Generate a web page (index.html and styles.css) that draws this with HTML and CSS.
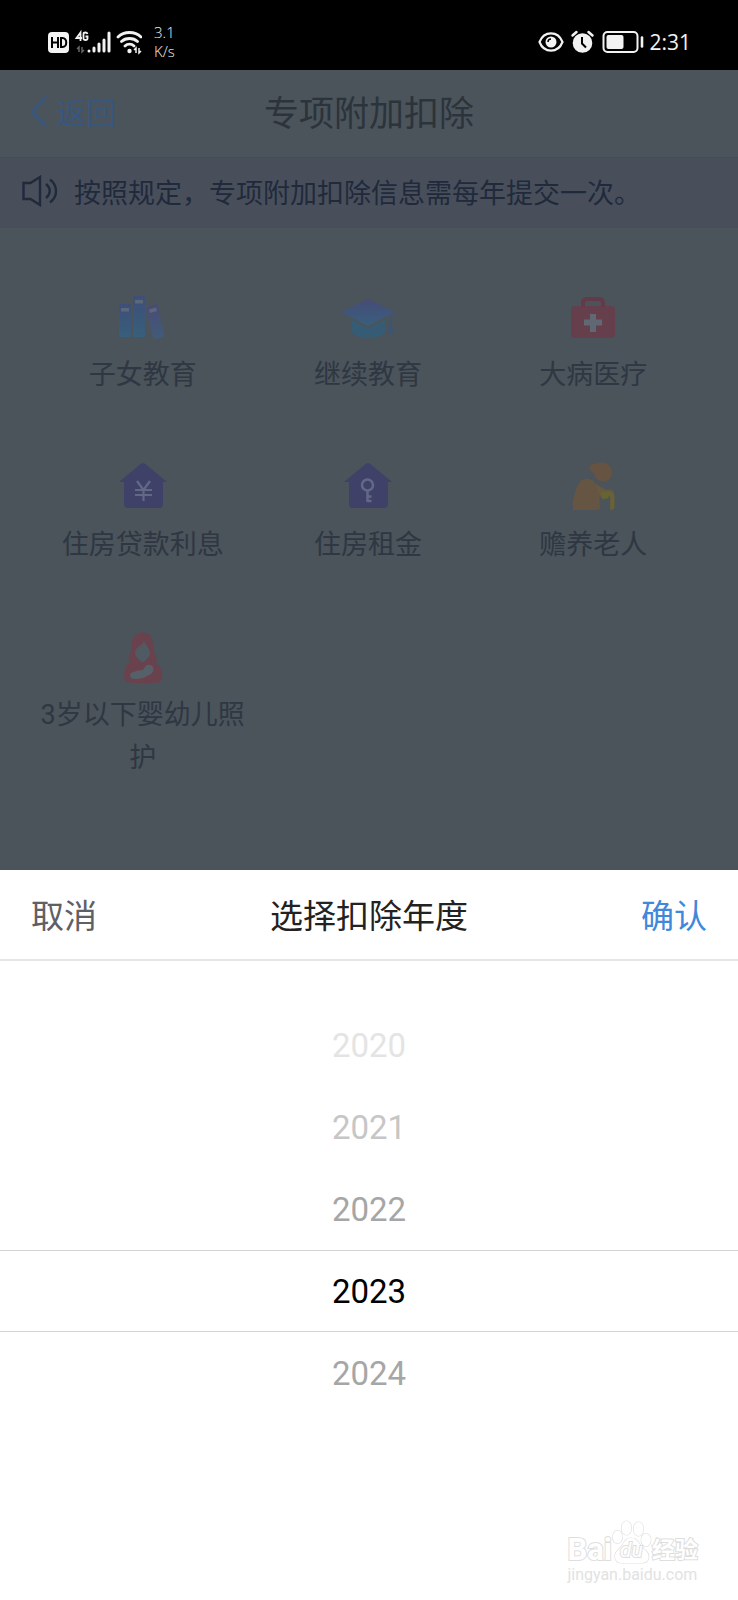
FILE: index.html
```html
<!DOCTYPE html>
<html lang="zh-CN">
  <head>
    <meta charset="UTF-8" />
    <meta name="viewport" content="width=device-width, initial-scale=1.0" />
    <title>专项附加扣除</title>
    <link rel="stylesheet" href="styles.css">
  </head>
  <body>
    <div class="status-bar">
      <div class="status-left">
        <svg width="94" height="26" viewBox="0 0 94 26" aria-hidden="true">
          <rect x="0" y="3" width="21" height="21" rx="4" fill="#f2f2f2" />
          <g fill="none" stroke="#000" stroke-width="2">
            <path d="M4 8v11M10 8v11M4 13.500h6M13 9v9h1.500c5 0 5-9 0-9z" />
          </g>
          <g fill="none" stroke="#f2f2f2" stroke-width="1.800">
            <path d="M32.500 12V3.500L28.500 9h5.500M39.500 5c-.5-2-4-2-4 0v4.500c0 2 4 2 4 0V7.500h-2" />
          </g>
          <path d="M31 23v-5l-2 2M34 18v5l2-2" fill="none" stroke="#666" stroke-width="1.500" />
          <g stroke="#f2f2f2" stroke-width="3" stroke-linecap="round">
            <path d="M41 22v0M46 22v-3M51 22v-7M56 22v-11M61 22V4" />
          </g>
          <g fill="none" stroke="#f2f2f2" stroke-width="2.800" stroke-linecap="round">
            <path d="M70 8c6-6 17-6 23 0M73.500 12.500c4-4 12-4 16 0M77 17c2.500-2.500 6.500-2.500 9 0" />
          </g>
          <circle cx="81.500" cy="22" r="2.200" fill="#f2f2f2" />
          <path d="M88 24v-5l-2 2M91 19v5l2-2" fill="none" stroke="#f2f2f2" stroke-width="1.500" />
        </svg>
        <div class="net-speed">3.1<br>K/s</div>
      </div>
      <div class="status-right">
        <svg width="106" height="26" viewBox="0 0 106 26" aria-hidden="true">
          <g fill="none" stroke="#f2f2f2" stroke-width="2.200">
            <path d="M1.500 13C6 1.500 20 1.500 24.500 13C20 24.500 6 24.500 1.500 13z" />
          </g>
          <circle cx="13" cy="13" r="5.500" fill="#f2f2f2" />
          <path d="M10 13a3 3 0 0 1 3-3" fill="none" stroke="#000" stroke-width="1.500" />
          <circle cx="44.500" cy="14" r="9.800" fill="#f2f2f2" />
          <path d="M34.500 6.500l4-3.500M54.500 6.500l-4-3.500" stroke="#f2f2f2" stroke-width="2.500" stroke-linecap="round" />
          <path d="M44 8v6.500l4 4" fill="none" stroke="#000" stroke-width="2" />
          <rect x="65.500" y="3" width="34" height="20" rx="4" fill="none" stroke="#f2f2f2" stroke-width="2" />
          <rect x="68.500" y="6" width="17" height="14" rx="2" fill="#f2f2f2" />
          <path d="M104 8.500v9" stroke="#f2f2f2" stroke-width="2.600" stroke-linecap="round" />
        </svg>
        <span class="clock">2:31</span>
      </div>
    </div>

    <main class="page">
      <header class="nav-bar">
        <a class="back" href="#">
          <svg width="18" height="32" viewBox="0 0 18 32" aria-hidden="true">
            <path d="M16 2L2 17l14 14" fill="none" stroke="#38577f" stroke-width="3" />
          </svg>
          返回
        </a>
        <h1>专项附加扣除</h1>
      </header>

      <div class="notice">
        <svg width="36" height="32" viewBox="0 0 36 32" aria-hidden="true">
          <g fill="none" stroke="#202a3b" stroke-width="2.400">
            <path d="M1.500 8H8.500L18 2v28l-9.500-6H1.500zM24 9c5 4 5 10 0 14M28 4.500c8 6 8 17 0 23" />
          </g>
        </svg>
        <p>按照规定，专项附加扣除信息需每年提交一次。</p>
      </div>

      <nav class="deductions">
        <a class="item" href="#">
          <svg width="60" height="60" viewBox="0 0 60 60" aria-hidden="true">
            <defs>
              <linearGradient id="book" x1="0" y1="0" x2="0" y2="1">
                <stop offset="0" stop-color="#3f4e78" />
                <stop offset="1" stop-color="#375f7c" />
              </linearGradient>
              <linearGradient id="bookTilted" x1="0" y1="0" x2="0" y2="1">
                <stop offset="0" stop-color="#4a4a74" />
                <stop offset="1" stop-color="#405c7a" />
              </linearGradient>
            </defs>
            <g fill="url(#book)">
              <rect x="6" y="16" width="12" height="33" rx="1.500" />
              <rect x="20" y="8" width="12" height="41" rx="1.500" />
            </g>
            <path d="M34 19l9-3q1.500 0 2 1.500l6 29.500q0 1.500-1 2l-8 2q-1.500 0-2-1.500l-7-28.500q-.5-1.500 1-2z" fill="url(#bookTilted)" />
            <path d="M8 20h8v3.500H8zM22 12h8v3.500h-8zM36 21.500l7-2 1 3.500-7 2z" fill="#5a687a" />
          </svg>
          <span>子女教育</span>
        </a>
        <a class="item" href="#">
          <svg width="60" height="60" viewBox="0 0 60 60" aria-hidden="true">
            <defs>
              <linearGradient id="cap" x1="0" y1="0" x2="0" y2="1">
                <stop offset="0" stop-color="#464c76" />
                <stop offset="1" stop-color="#395f7d" />
              </linearGradient>
            </defs>
            <path d="M3 24L28 12q2-.8 4 0l25 12-27 14z" fill="url(#cap)" />
            <path d="M14 32l16 8.500L47 32v12c-4 8-29 8-33 0z" fill="#365c75" />
            <path d="M52 26v10q-4 6-1.500 10h4.500q1-5-1.500-10V26z" fill="#3f5470" />
          </svg>
          <span>继续教育</span>
        </a>
        <a class="item" href="#">
          <svg width="60" height="60" viewBox="0 0 60 60" aria-hidden="true">
            <rect x="8" y="18" width="44" height="32" rx="4" fill="#653f4c" />
            <path d="M20 19v-4q0-4 4-4h12q4 0 4 4v4" fill="none" stroke="#653a48" stroke-width="4" />
            <path d="M27 26h6v5.500h6v6h-6V44h-6v-6.500h-6v-6h6z" fill="#5f6873" />
          </svg>
          <span>大病医疗</span>
        </a>
        <a class="item" href="#">
          <svg width="60" height="60" viewBox="0 0 60 60" aria-hidden="true">
            <path d="M30 5q1.500 0 3 1.500L54 24h-4v22q0 4-4 4H15q-4 0-4-4V24H6L27 6.500Q28.500 5 30 5z" fill="#404169" />
            <path d="M24 23l6.500 9 6.500-9M30.500 32v11M22 32h17M22 37h17" fill="none" stroke="#626986" stroke-width="2.200" />
          </svg>
          <span>住房贷款利息</span>
        </a>
        <a class="item" href="#">
          <svg width="60" height="60" viewBox="0 0 60 60" aria-hidden="true">
            <path d="M30 5q1.500 0 3 1.500L54 24h-4v22q0 4-4 4H15q-4 0-4-4V24H6L27 6.500Q28.500 5 30 5z" fill="#404169" />
            <circle cx="29.500" cy="27" r="5.500" fill="none" stroke="#626986" stroke-width="2.500" />
            <path d="M29.500 33v11M29.500 38.500h4M29.500 43h4" fill="none" stroke="#626986" stroke-width="2.500" />
          </svg>
          <span>住房租金</span>
        </a>
        <a class="item" href="#">
          <svg width="60" height="60" viewBox="0 0 60 60" aria-hidden="true">
            <path d="M26 9q0-3 6-3q4-2 8-1.500c12 1 12 19 0 19c-5 0-8-4-9-8q-4-2-5-6.500z" fill="#665342" />
            <path d="M10 52C9 36 16 22 21 21q6-2 10 3q5 4 6 9q-1 6 0 16q0 3-3 3z" fill="#675544" />
            <path d="M33 26l10 6q7-2 8 3v14q0 3-4 3V39q-1-2-2 0q-1 3-3 1q-2 3-4-1q-3-2-5-13z" fill="#69593f" />
            <path d="M38 34h9q4.500 0 4.500 5v10q0 3-4 3V39q-1-2-2 0q-1 3-3 1q-2 3-4-1z" fill="#666334" />
          </svg>
          <span>赡养老人</span>
        </a>
        <a class="item" href="#">
          <svg width="60" height="60" viewBox="0 0 60 60" aria-hidden="true">
            <path d="M24 6c5-2 10-2 13 1c3 4 3 11 4 16c1 4 4 7 2 12c5 2 6 9 6 14q0 6-6 5.500q-6 1-14 .5q-6 0-12-.5q-6 0-6-7q0-10 6-13c-3-4 0-8 1-12c1-5 0-13 6-16.500z" fill="#6a424e" />
            <path d="M31 13c-2 5-9 6-9 12c0 4 4 6 5 8q3 2 5 0c1-2 5-4 5-8c0-5-4-7-6-12z" fill="#505a63" />
            <path d="M18 45q6-3 12-3q3-6 7-5c5 1 4 7 1 9l-8 4q-10 2-12 0q-2-3 0-5z" fill="#566068" />
          </svg>
          <span>3岁以下婴幼儿照护</span>
        </a>
      </nav>
    </main>

    <section class="sheet" role="dialog" aria-labelledby="sheetTitle">
      <div class="sheet-header">
        <button class="cancel" type="button">取消</button>
        <h2 id="sheetTitle">选择扣除年度</h2>
        <button class="confirm" type="button">确认</button>
      </div>
      <div class="picker" role="listbox" aria-labelledby="sheetTitle">
        <button class="year far" type="button" role="option">2020</button>
        <button class="year mid" type="button" role="option">2021</button>
        <button class="year" type="button" role="option">2022</button>
        <button class="year selected" type="button" role="option" aria-selected="true">2023</button>
        <button class="year" type="button" role="option">2024</button>
      </div>

      <div class="watermark">
        <div class="brand">
          <span class="brand-name">Bai</span>
          <span class="paw">
            <svg width="40" height="44" viewBox="0 0 40 44" aria-hidden="true">
              <g fill="#fff" stroke="#dedede" stroke-width="1.200">
                <ellipse cx="5.500" cy="17" rx="4.800" ry="6.500" />
                <ellipse cx="14.500" cy="8" rx="5" ry="7" />
                <ellipse cx="26.500" cy="9" rx="5" ry="7" />
                <ellipse cx="34" cy="20" rx="4.800" ry="6.500" />
                <path d="M19 18c-7 0-7 7-12 11c-7 6-4 14 3 14h20c8 0 9-9 2-14c-5-4-6-11-13-11z" />
              </g>
            </svg>
            <span class="paw-text">du</span>
          </span>
          <span class="brand-cn">经验</span>
        </div>
        <div class="brand-url">jingyan.baidu.com</div>
      </div>
    </section>
  </body>
</html>
```
FILE: styles.css
```css
* {
  box-sizing: border-box;
}

body {
  margin: 0;
  min-height: 100vh;
  display: flex;
  flex-direction: column;
  font-family: Roboto, "Noto Sans CJK SC", sans-serif;
  background-color: #4b535b;
}

h1,
h2,
p {
  margin: 0;
  font-weight: normal;
}

a {
  text-decoration: none;
}

button {
  border: none;
  padding: 0;
  background: none;
  font-family: inherit;
  cursor: pointer;
}

svg {
  display: block;
  flex: none;
}

/* status bar */
.status-bar {
  height: 70px;
  padding: 14px 47px 0 48px;
  display: flex;
  justify-content: space-between;
  align-items: center;
  background-color: #000;
  color: #f2f2f2;
}

.status-left,
.status-right {
  display: flex;
  align-items: center;
}

.status-left {
  gap: 12px;
}

.status-right {
  gap: 5px;
}

.net-speed {
  font-family: "Open Sans", sans-serif;
  font-size: 15px;
  font-weight: 300;
  line-height: 19px;
}

.clock {
  font-family: "Open Sans", sans-serif;
  font-size: 21px;
  line-height: 26px;
}

/* page under the sheet */
.nav-bar {
  height: 88px;
  padding: 0 30px 6px;
  display: grid;
  grid-template-columns: 1fr auto 1fr;
  align-items: center;
  border-bottom: 1px solid #434c59;
}

.back {
  display: flex;
  align-items: center;
  gap: 8px;
  font-size: 30px;
  color: #38577f;
}

.nav-bar h1 {
  font-size: 35px;
  color: #2b333b;
}

.notice {
  height: 70px;
  padding: 0 22px 4px;
  display: flex;
  align-items: center;
  gap: 16px;
  background-color: #484f5b;
}

.notice p {
  font-size: 27px;
  color: #202a3b;
}

.deductions {
  padding: 60px 32px 90px 30px;
  display: grid;
  grid-template-columns: repeat(3, 1fr);
  row-gap: 61px;
}

.item {
  display: flex;
  flex-direction: column;
  align-items: center;
  gap: 6px;
  font-size: 27px;
  line-height: 43px;
  text-align: center;
  color: #2e3742;
}

/* bottom sheet */
.sheet {
  position: relative;
  flex: 1;
  background-color: #fff;
}

.sheet-header {
  height: 91px;
  padding: 0 31px 2px;
  display: grid;
  grid-template-columns: 1fr auto 1fr;
  align-items: center;
  border-bottom: 2px solid #e5e5e5;
}

.sheet-header h2 {
  font-size: 33px;
  color: #222;
}

.cancel,
.confirm {
  font-size: 33px;
}

.cancel {
  justify-self: start;
  color: #5f6066;
}

.confirm {
  justify-self: end;
  color: #4187dc;
}

.picker {
  padding: 43px 0 185px;
  display: flex;
  flex-direction: column;
}

.year {
  height: 82px;
  font-size: 33px;
  color: #a6a6a6;
}

.year.mid {
  color: #c6c6c6;
}

.year.far {
  color: #e4e4e4;
}

.year.selected {
  border-top: 1px solid #d4d4d4;
  border-bottom: 1px solid #d4d4d4;
  color: #000;
}

/* watermark over the sheet */
.watermark {
  position: absolute;
  right: 40px;
  bottom: 14px;
  color: #fff;
  -webkit-text-stroke: 2px #dedede;
  paint-order: stroke fill;
}

.brand {
  display: flex;
  align-items: flex-end;
}

.brand-name {
  font-size: 31px;
  font-weight: bold;
  line-height: 28px;
}

.paw {
  position: relative;
}

.paw-text {
  position: absolute;
  left: 8px;
  bottom: 2px;
  font-size: 21px;
  font-style: italic;
  line-height: 24px;
}

.brand-cn {
  font-size: 23px;
  font-weight: bold;
  line-height: 26px;
}

.brand-url {
  font-size: 16px;
  line-height: 22px;
  color: #e2e2e2;
  -webkit-text-stroke: 0;
}
```
